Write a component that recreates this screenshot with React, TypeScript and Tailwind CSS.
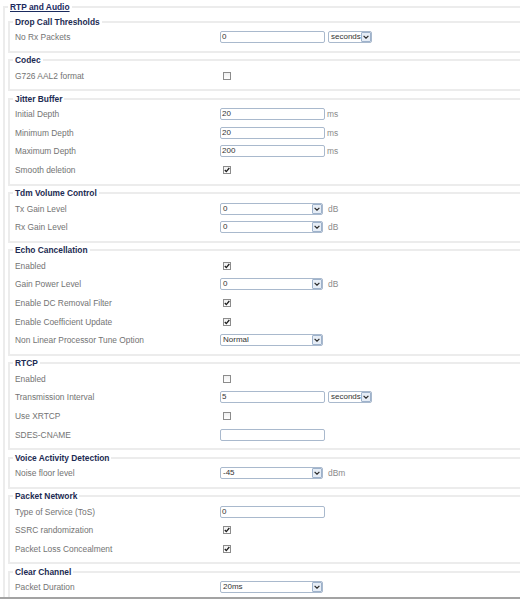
import React from "react";

type Control =
  | { kind: "input"; value: string }
  | { kind: "check"; checked: boolean }
  | { kind: "select"; value: string };

interface Row {
  label: string;
  control: Control;
  unit?: string;
  seconds?: boolean;
}

interface Section {
  title: string;
  rows: Row[];
}

const sections: Section[] = [
  {
    title: "Drop Call Thresholds",
    rows: [{ label: "No Rx Packets", control: { kind: "input", value: "0" }, seconds: true }],
  },
  {
    title: "Codec",
    rows: [{ label: "G726 AAL2 format", control: { kind: "check", checked: false } }],
  },
  {
    title: "Jitter Buffer",
    rows: [
      { label: "Initial Depth", control: { kind: "input", value: "20" }, unit: "ms" },
      { label: "Minimum Depth", control: { kind: "input", value: "20" }, unit: "ms" },
      { label: "Maximum Depth", control: { kind: "input", value: "200" }, unit: "ms" },
      { label: "Smooth deletion", control: { kind: "check", checked: true } },
    ],
  },
  {
    title: "Tdm Volume Control",
    rows: [
      { label: "Tx Gain Level", control: { kind: "select", value: "0" }, unit: "dB" },
      { label: "Rx Gain Level", control: { kind: "select", value: "0" }, unit: "dB" },
    ],
  },
  {
    title: "Echo Cancellation",
    rows: [
      { label: "Enabled", control: { kind: "check", checked: true } },
      { label: "Gain Power Level", control: { kind: "select", value: "0" }, unit: "dB" },
      { label: "Enable DC Removal Filter", control: { kind: "check", checked: true } },
      { label: "Enable Coefficient Update", control: { kind: "check", checked: true } },
      { label: "Non Linear Processor Tune Option", control: { kind: "select", value: "Normal" } },
    ],
  },
  {
    title: "RTCP",
    rows: [
      { label: "Enabled", control: { kind: "check", checked: false } },
      { label: "Transmission Interval", control: { kind: "input", value: "5" }, seconds: true },
      { label: "Use XRTCP", control: { kind: "check", checked: false } },
      { label: "SDES-CNAME", control: { kind: "input", value: "" } },
    ],
  },
  {
    title: "Voice Activity Detection",
    rows: [{ label: "Noise floor level", control: { kind: "select", value: "-45" }, unit: "dBm" }],
  },
  {
    title: "Packet Network",
    rows: [
      { label: "Type of Service (ToS)", control: { kind: "input", value: "0" } },
      { label: "SSRC randomization", control: { kind: "check", checked: true } },
      { label: "Packet Loss Concealment", control: { kind: "check", checked: true } },
    ],
  },
  {
    title: "Clear Channel",
    rows: [{ label: "Packet Duration", control: { kind: "select", value: "20ms" } }],
  },
];

function Arrow() {
  return (
    <div className="flex h-[10px] w-[10px] shrink-0 items-center justify-center rounded-[1px] border border-[#9eb2cb] bg-[#e6edf6]">
      <svg width="6" height="4" viewBox="0 0 6 4">
        <path d="M0.6 0.8 L3 3.2 L5.4 0.8" fill="none" stroke="#2b2b2b" strokeWidth="1.2" />
      </svg>
    </div>
  );
}

function Select({ value, wide = true }: { value: string; wide?: boolean }) {
  return (
    <div
      className={`flex h-[12px] items-center rounded-[2px] border border-[#a9b9cd] bg-white pr-[0.5px] ${
        wide ? "w-[103px]" : "w-[44px]"
      }`}
    >
      <span className="flex-1 pl-[2px] text-[8px] leading-[10px] text-[#333]">{value}</span>
      <Arrow />
    </div>
  );
}

function Check({ checked }: { checked: boolean }) {
  return (
    <div className="ml-[2.5px] flex h-[8px] w-[8px] items-center justify-center border border-[#8c8c8c] bg-gradient-to-b from-[#f0f0f0] to-white">
      {checked && (
        <svg width="6" height="6" viewBox="0 0 6 6">
          <path d="M0.8 3 L2.3 4.6 L5.3 1" fill="none" stroke="#1e1e1e" strokeWidth="1.3" />
        </svg>
      )}
    </div>
  );
}

function FieldRow({ row }: { row: Row }) {
  const c = row.control;
  return (
    <div className="flex h-[18.7px] items-center">
      <div className="w-[207px] shrink-0 pl-[2px] text-[#737373]">{row.label}</div>
      {c.kind === "input" && (
        <div className="flex h-[12px] w-[105px] items-center rounded-[2px] border border-[#a9b9cd] bg-white pl-[1px] text-[8px] text-[#333]">
          {c.value}
        </div>
      )}
      {c.kind === "check" && <Check checked={c.checked} />}
      {c.kind === "select" && <Select value={c.value} />}
      {row.seconds && (
        <div className="ml-[3px]">
          <Select value="seconds" wide={false} />
        </div>
      )}
      {row.unit && (
        <span className={`text-[#8a8a8a] ${c.kind === "input" ? "ml-[2px]" : "ml-[5px]"}`}>{row.unit}</span>
      )}
    </div>
  );
}

export default function App() {
  return (
    <div
      className="box-border h-[599px] w-[520px] overflow-hidden border-b-2 border-[#a3a3a3] bg-white text-[8.4px] leading-[10px]"
      style={{ fontFamily: '"Liberation Sans", Arial, sans-serif' }}
    >
      <fieldset className="ml-[3px] mt-[2px] w-[580px] border-2 border-[#ececec] pl-[3px] pt-[5px]">
        <legend className="px-[2px] text-[8.4px] font-bold leading-[10px] text-[#1a2a5e] underline">
          RTP and Audio
        </legend>
        <div className="flex flex-col gap-[2.7px]">
          {sections.map((s) => (
            <fieldset key={s.title} className="border-2 border-[#ececec] pb-[4px] pl-[3px] pt-[1px]">
              <legend className="px-[2px] text-[8.4px] font-bold leading-[10px] text-[#1c2b52]">{s.title}</legend>
              {s.rows.map((r) => (
                <FieldRow key={r.label} row={r} />
              ))}
            </fieldset>
          ))}
        </div>
      </fieldset>
    </div>
  );
}
